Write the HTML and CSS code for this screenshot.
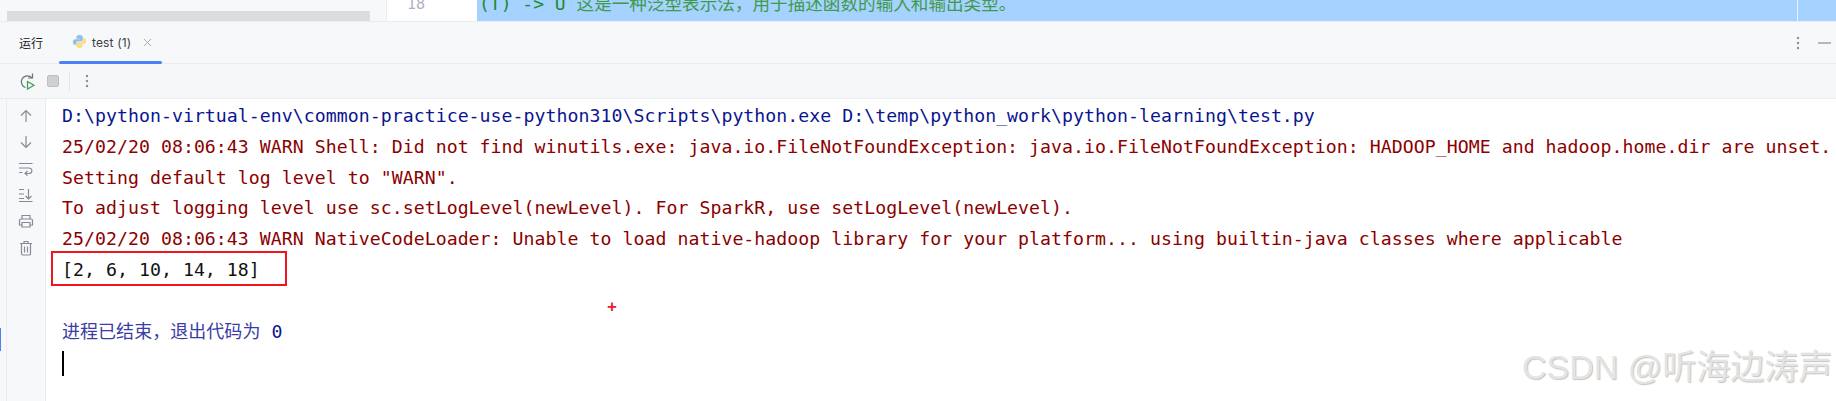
FILE: index.html
```html
<!DOCTYPE html>
<html lang="zh">
<head>
<meta charset="utf-8">
<title>运行 test (1)</title>
<link rel="stylesheet" href="styles.css">
</head>
<body>
<div class="app">
  <header class="editor-strip">
    <div class="project-pane"><div class="hscroll"></div></div>
    <div class="gutter"><span class="line-no">18</span></div>
    <div class="code-line">
      <span class="code-text">(T) -&gt; U <span class="cjk">这是一种泛型表示法，用于描述函数的输入和输出类型。</span></span>
      <span class="margin-guide"></span>
    </div>
  </header>
  <nav class="tabs">
    <span class="tool-title">运行</span>
    <div class="tab">
      <svg class="py" viewBox="0 0 16 16" width="16" height="16"><path fill="#8fbfe6" d="M8 1C5.500 1 4.700 2 4.700 3.400V5h3.600v.6H3.200C1.800 5.600 1 6.700 1 8.500s.8 3 2.200 3h1.300V9.700c0-1.200 1-2.100 2.200-2.100h3c1 0 1.800-.8 1.800-1.800V3.400C11.500 2 10.400 1 8 1z"/><path fill="#f5dc8c" d="M8 15c2.500 0 3.300-1 3.300-2.400V11H7.700v-.6h5.100c1.400 0 2.200-1.100 2.200-2.900s-.8-3-2.200-3h-1.300v1.800c0 1.200-1 2.100-2.200 2.100h-3c-1 0-1.800.8-1.800 1.800v2.400C4.500 14 5.600 15 8 15z"/></svg>
      <span class="tab-label">test (1)</span>
      <svg class="close" viewBox="0 0 10 10" width="9" height="9"><path d="M1 1l8 8M9 1l-8 8" stroke="#a8adb5" stroke-width="1.100" fill="none"/></svg>
    </div>
    <div class="tab-actions">
      <svg viewBox="0 0 4 14" width="4" height="14"><g fill="#8c8f96"><circle cx="2" cy="2" r="1.200"/><circle cx="2" cy="7" r="1.200"/><circle cx="2" cy="12" r="1.200"/></g></svg>
      <span class="minimize"></span>
    </div>
  </nav>
  <div class="toolbar">
    <svg viewBox="0 0 18 18" width="18" height="18"><path d="M7.500 15.500A6 6 0 1 1 14 6" fill="none" stroke="#6c707e" stroke-width="1.200"/><path d="M14.500 1.500v4.500h-4.500" fill="none" stroke="#6c707e" stroke-width="1.200"/><path d="M9.500 9.500l6.500 3.700-6.500 3.700z" fill="none" stroke="#3b9a4f" stroke-width="1.200"/></svg>
    <span class="stop"></span>
    <span class="sep"></span>
    <svg viewBox="0 0 4 14" width="4" height="14"><g fill="#8c8f96"><circle cx="2" cy="2" r="1.200"/><circle cx="2" cy="7" r="1.200"/><circle cx="2" cy="12" r="1.200"/></g></svg>
  </div>
  <main class="console-wrap">
    <aside class="side">
      <svg viewBox="0 0 14 14" width="14" height="14"><path d="M7 13V1.500M2 6.500l5-5 5 5" class="ic"/></svg>
      <svg viewBox="0 0 14 14" width="14" height="14"><path d="M7 1v11.500M2 7.500l5 5 5-5" class="ic"/></svg>
      <svg viewBox="0 0 16 14" width="16" height="14"><path d="M1 1.500h13.500M1 6h9.500c4.500 0 4.500 5.500 0 5.500H7M9.500 9l-2.500 2.500 2.500 2M1 10.500h3.500" class="ic"/></svg>
      <svg viewBox="0 0 16 14" width="16" height="14"><path d="M1 1.500h5M1 6h5M1 10.500h5M1 13.500h13.500M10.500 1v10M7.500 8l3 3 3-3" class="ic"/></svg>
      <svg viewBox="0 0 16 14" width="16" height="14"><path d="M4 5V1.500h8V5M4 11H1.500V6.500A1.500 1.500 0 0 1 3 5h10a1.500 1.500 0 0 1 1.500 1.500V11H12M4 8.500h8v4.500H4z" class="ic"/></svg>
      <svg viewBox="0 0 14 16" width="14" height="16"><path d="M1 3.500h12M5 3.500V1.500h4v2M2.500 3.500v10a1.500 1.500 0 0 0 1.500 1.500h6a1.500 1.500 0 0 0 1.500-1.500v-10M5.500 6.500v6M8.500 6.500v6" class="ic"/></svg>
    </aside>
    <span class="side-marker"></span>
    <section class="console">
      <div class="ln cmd">D:\python-virtual-env\common-practice-use-python310\Scripts\python.exe D:\temp\python_work\python-learning\test.py</div>
      <div class="ln err">25/02/20 08:06:43 WARN Shell: Did not find winutils.exe: java.io.FileNotFoundException: java.io.FileNotFoundException: HADOOP_HOME and hadoop.home.dir are unset.</div>
      <div class="ln err">Setting default log level to "WARN".</div>
      <div class="ln err">To adjust logging level use sc.setLogLevel(newLevel). For SparkR, use setLogLevel(newLevel).</div>
      <div class="ln err">25/02/20 08:06:43 WARN NativeCodeLoader: Unable to load native-hadoop library for your platform... using builtin-java classes where applicable</div>
      <div class="ln out"><span class="result">[2, 6, 10, 14, 18]</span></div>
      <div class="ln"></div>
      <div class="ln cmd exit"><span class="cjk">进程已结束，退出代码为</span> 0</div>
      <div class="ln"><span class="caret"></span></div>
    </section>
  </main>
  <span class="plus">+</span>
  <span class="watermark">CSDN @听海边涛声</span>
</div>
</body>
</html>
```
FILE: styles.css
```css
* { box-sizing: border-box; }
html, body { margin: 0; padding: 0; height: 100%; background: #fff; }
.app {
  position: relative;
  width: 1836px;
  height: 401px;
  overflow: hidden;
  display: flex;
  flex-direction: column;
  background: #f7f8fa;
  font-family: Inter, "Noto Sans CJK SC", sans-serif;
}
.editor-strip {
  display: flex;
  height: 22px;
  flex: none;
  border-bottom: 1px solid #ebecf0;
}
.project-pane {
  width: 386px;
  flex: none;
  padding: 11px 16px 0 7px;
  background: #f7f8fa;
}
.hscroll { height: 10px; background: #dcdcde; }
.gutter {
  width: 91px;
  flex: none;
  background: #fff;
  border-left: 1px solid #ebecf0;
  position: relative;
  overflow: hidden;
}
.line-no {
  position: absolute;
  left: 20px;
  top: -7px;
  font: 15px/22px "DejaVu Sans Mono", monospace;
  color: #aeb3c2;
}
.code-line {
  flex: 1;
  background: #a6d2ff;
  position: relative;
  overflow: hidden;
}
.code-text {
  position: absolute;
  left: 2px;
  top: -8px;
  white-space: pre;
  font: 18px/22px "DejaVu Sans Mono", monospace;
  color: #1f8a2e;
}
.code-text .cjk {
  font-family: "Noto Sans CJK SC", sans-serif;
  font-size: 17.600px;
  color: #3f9a4c;
}
.margin-guide {
  position: absolute;
  left: 1320px;
  top: 0;
  bottom: 0;
  width: 1px;
  background: #e8f2fc;
}
.tabs {
  height: 42px;
  flex: none;
  display: flex;
  align-items: center;
  padding-left: 19px;
  border-bottom: 1px solid #ebecf0;
  position: relative;
}
.tool-title { font-size: 12px; color: #1f2024; width: 53px; }
.tab {
  display: flex;
  align-items: center;
  height: 41px;
  position: relative;
  width: 103px;
}
.tab::after {
  content: "";
  position: absolute;
  left: -13px;
  bottom: -1px;
  width: 103px;
  height: 3px;
  border-radius: 2px;
  background: #4a81f4;
}
.py { width: 15px; height: 15px; margin-right: 5px; margin-top: -2px; }
.tab-label { font-size: 12px; color: #3a3d44; letter-spacing: .15px; }
.close { margin-left: 12px; }
.tab-actions {
  margin-left: auto;
  display: flex;
  align-items: center;
  gap: 18px;
  padding-right: 5px;
}
.minimize { display: block; width: 13px; height: 2px; background: #b5b7bc; }
.toolbar {
  height: 35px;
  flex: none;
  display: flex;
  align-items: center;
  padding-left: 18px;
  background: #f6f7f9;
  border-bottom: 1px solid #ebecf0;
}
.stop {
  display: block;
  width: 12px;
  height: 12px;
  margin-left: 11px;
  border-radius: 2px;
  background: #cfd0d2;
  border: 1px solid #bfc0c3;
}
.sep { display: block; width: 1px; height: 20px; background: #e4e5e8; margin: 0 15px 0 10px; }
.console-wrap { flex: 1; display: flex; min-height: 0; position: relative; }
.side {
  width: 46px;
  flex: none;
  background: #f7f8fa;
  border-right: 1px solid #ebecf0;
  display: flex;
  flex-direction: column;
  align-items: center;
  gap: 12.300px;
  padding: 10px 0 0 6px;
}
.side::before {
  content: "";
  position: absolute;
  left: 6px;
  top: 0;
  bottom: 0;
  width: 1px;
  background: #ebecf0;
}
.side-marker {
  position: absolute;
  left: 0;
  top: 229px;
  width: 1px;
  height: 23px;
  background: #4a81f4;
}
.ic { fill: none; stroke: #868a95; stroke-width: 1.200; }
.console {
  flex: 1;
  background: #fff;
  padding: 2px 0 0 16px;
  font: 18.200px/30.800px "DejaVu Sans Mono", "Noto Sans CJK SC", monospace;
  letter-spacing: .04px;
  overflow: hidden;
  min-width: 0;
}
.ln { height: 30.800px; white-space: pre; }
.cmd { color: #0a1590; }
.err { color: #8b0000; }
.out { color: #111; }
.exit { margin-top: -2px; margin-bottom: 2px; }
.cjk { font-family: "Noto Sans CJK SC", sans-serif; }
.console .cmd .cjk { font-size: 18px; color: #3c3ca5; }
.result { position: relative; }
.result::after {
  content: "";
  position: absolute;
  left: -11px;
  top: -8px;
  right: -27px;
  bottom: -6px;
  border: 2px solid #f0141e;
}
.caret { display: inline-block; width: 2px; height: 25px; background: #000; vertical-align: -8px; }
.plus {
  position: absolute;
  left: 607px;
  top: 297px;
  font: bold 17px/20px "Liberation Sans", sans-serif;
  color: #e8202a;
}
.watermark {
  position: absolute;
  left: 1522px;
  top: 347px;
  font: 34px/40px "Liberation Sans", "Noto Sans CJK SC", sans-serif;
  color: #e4e4e4;
  text-shadow: 1px 1px 1px #c4c4c4;
  white-space: nowrap;
}
```
